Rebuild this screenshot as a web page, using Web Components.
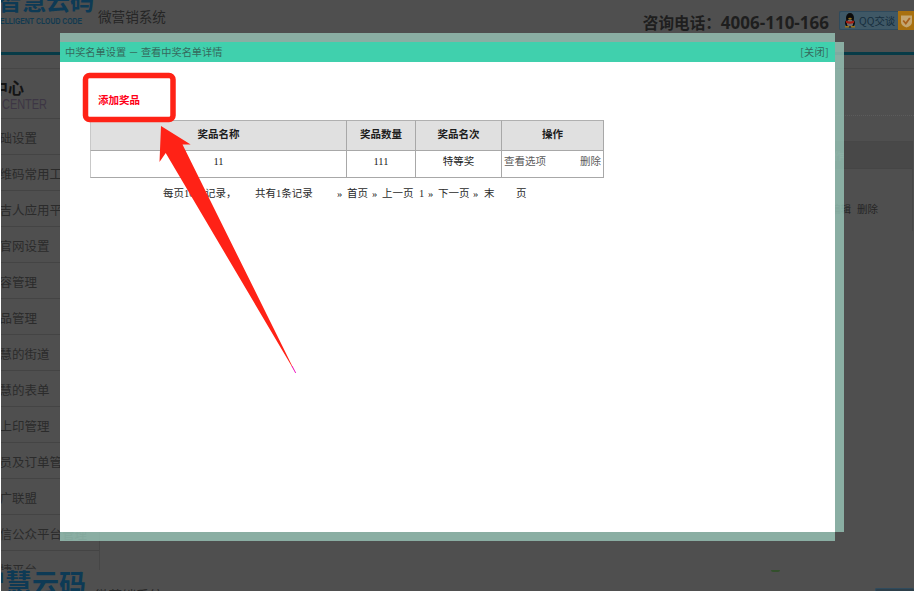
<!DOCTYPE html>
<html lang="zh-CN"><head><meta charset="utf-8"><title>中奖名单设置</title>
<style>
html,body{margin:0;height:591px;overflow:hidden;background:#fff}
body{font-family:"Liberation Serif","Noto Sans CJK SC",serif}
</style></head><body>
<cc-page>
  <cc-header slot="top"></cc-header>
  <cc-side slot="side" title-text="中心" sub="CENTER">
    <cc-item>基础设置</cc-item><cc-item>二维码常用工具</cc-item><cc-item>微吉人应用平台</cc-item><cc-item>微官网设置</cc-item>
    <cc-item>内容管理</cc-item><cc-item>产品管理</cc-item><cc-item>智慧的街道</cc-item><cc-item>智慧的表单</cc-item>
    <cc-item>掌上印管理</cc-item><cc-item>会员及订单管理</cc-item><cc-item>推广联盟</cc-item><cc-item>微信公众平台管理</cc-item>
    <cc-item last>快捷平台</cc-item>
  </cc-side>
  <cc-back slot="main"></cc-back>
  <cc-header slot="bottom" second></cc-header>
</cc-page>
<cc-modal heading="中奖名单设置 － 查看中奖名单详情" close="[关闭]">
  <cc-prize-table></cc-prize-table>
  <cc-pager></cc-pager>
</cc-modal>
<cc-callout></cc-callout>
<script>
const CJK='"Noto Sans CJK SC",sans-serif';
function def(name,html,init){
  customElements.define(name,class extends HTMLElement{
    constructor(){super();this.attachShadow({mode:'open'}).innerHTML=html;}
    connectedCallback(){if(init)init(this);}
  });
}
def('cc-page',`<style>
:host{display:flex;flex-direction:column;width:913px;height:591px;margin-left:1px;background:#4f4f4f;overflow:hidden}
.body{display:flex;height:501px;flex:none}
</style><slot name="top"></slot><div class="body"><slot name="side"></slot><slot name="main"></slot></div><slot name="bottom"></slot>`);

def('cc-header',`<style>
:host{display:block;height:69px;flex:none;box-sizing:border-box;border-bottom:1px solid #464646;font-family:${CJK}}
:host([second]){height:30px;border:0}
.row{display:flex;height:52px;position:relative}
.brand{width:97px;flex:none;overflow:hidden;height:28px}
.logo{font:700 24px/24px ${CJK};color:#0d3a55;margin:-12px 0 0 -3px;white-space:nowrap;height:24px}
.en{font:700 8.400px/10px "Liberation Sans",sans-serif;color:#123a50;margin:4px 0 0 -12px;white-space:nowrap;transform:scaleX(.82);transform-origin:0 0;width:130px}
.sys{font-size:13.6px;line-height:16px;color:#262626;margin-top:8px;white-space:nowrap}
.end{margin-left:auto;display:flex;align-items:flex-start}
.tel{font:700 15.6px/22px ${CJK};color:#1e1e1e;margin:11px 10px 0 0;white-space:nowrap}
.tel b{font:700 17px/22px "Open Sans",sans-serif;}
.qq{display:flex;height:19px;margin-top:11px;width:75px}
.qq .l{display:flex;align-items:center;gap:2px;width:59px;box-sizing:border-box;background:#3f5866;border:1px solid #2f4a5c;border-right:0;border-radius:2px 0 0 2px;padding-left:3px;font:10.4px/17px ${CJK};color:#152d3d;white-space:nowrap}
.qq .r{width:16px;background:#a8700f;display:flex;align-items:center;justify-content:center}
.rule{height:3px;background:#073b47}
:host([second]) .brand{width:94px;height:30px}
:host([second]) .logo{font-size:27px;line-height:27px;margin:-1px 0 0 -23px;height:30px}
:host([second]) .en{display:none}
:host([second]) .sys{margin-top:17px}
:host([second]) .tel{visibility:hidden}
:host([second]) .qq{margin-top:18px;width:39px}
:host([second]) .l{width:39px;border-radius:2px;background:#2d3f4a;padding:0;overflow:hidden}
:host([second]) .l *,:host([second]) .r{display:none}
:host([second]) .rule{display:none}
:host([second]) .row{height:30px}
</style><div class="row">
<div class="brand"><div class="logo">智慧云码</div><div class="en">INTELLIGENT CLOUD CODE</div></div>
<div class="sys">微营销系统</div>
<div class="end"><div class="tel">咨询电话：<b>4006-110-166</b></div>
<div class="qq"><div class="l"><svg width="14" height="15" viewBox="0 0 14 15"><ellipse cx="7" cy="5" rx="4" ry="5" fill="#0c0c0c"/><ellipse cx="7" cy="10" rx="5" ry="4.5" fill="#0c0c0c"/><ellipse cx="7" cy="10" rx="3.2" ry="3.6" fill="#6e6e6e"/><path d="M3 7.5Q7 9.6 11 7.500L11 9.800Q7 11.500 3 9.800Z" fill="#a31d12"/><path d="M2 13h4v1.5H2zM8 13h4v1.5H8z" fill="#99741a"/><ellipse cx="7" cy="5.6" rx="1.8" ry=".9" fill="#99741a"/></svg><span>QQ交谈</span></div>
<div class="r"><svg width="13" height="14" viewBox="0 0 13 14"><path d="M1 1.5h11v6.500q0 3.500-5.500 5.500Q1 11.500 1 8z" fill="#c4a671"/><path d="M3.200 6.500l2.600 3 4-5.500" fill="none" stroke="#a8601a" stroke-width="1.800"/></svg></div></div></div>
</div><div class="rule"></div>`);

def('cc-side',`<style>
:host{display:block;width:98px;flex:none;border-right:1px solid #464646;overflow:hidden;font-family:${CJK}}
.head{height:49px;border-bottom:1px solid #444;overflow:hidden}
.t{font:700 16px/20px ${CJK};color:#141414;margin:8px 0 0 -9px}
.s{font:15px/14px "Liberation Sans",sans-serif;color:#3d3644;margin:0 0 0 1px;transform:scaleX(.73);transform-origin:0 0;width:70px}
</style><div class="head"><div class="t"></div><div class="s"></div></div><slot></slot>`,el=>{
  el.shadowRoot.querySelector('.t').textContent=el.getAttribute('title-text');
  el.shadowRoot.querySelector('.s').textContent=el.getAttribute('sub');
});

def('cc-item',`<style>
:host{display:block;height:35px;border-bottom:1px solid #444;font:12.500px/37px ${CJK};color:#2b2b2b;white-space:nowrap;margin-left:-14px}
:host([last]){height:19px;border:0;overflow:visible}
</style><slot></slot>`);

def('cc-back',`<style>
:host{display:block;flex:1;min-width:0;font-family:${CJK}}
.dots{height:46px;border-bottom:1px dotted #5c5c5c}
.box{margin:25px 1px 0 10px;height:89px;border:1px solid #474747;border-bottom:0;font-size:10.500px;color:#262626}
.h{height:26px;background:#484848;border-bottom:1px solid #454545;text-align:right;padding-right:68px;line-height:27px;color:#6c6c6c}
.r{text-align:right;padding:32px 34px 0 0;line-height:16px}
.r span{margin-left:6px}
</style><div class="dots"></div><div class="box"><div class="h">操作</div><div class="r"><span>编辑</span><span>删除</span></div></div>`);

def('cc-modal',`<style>
:host{position:absolute;left:60px;top:33px;display:grid;grid-template:9px 490px 9px/775px 9px;font-family:"Liberation Serif",${CJK};color:#222}
.strip{background:rgba(148,190,178,.85)}
.top{grid-area:1/1}.right{grid-area:2/2}.bottom{grid-area:3/1}
main{grid-area:2/1;background:#fff;display:flex;flex-direction:column;min-height:0}
header{height:20px;flex:none;background:#40d0ad;display:flex;justify-content:space-between;padding:0 6px 0 5px;font:10.200px/20px ${CJK};color:#35695c;white-space:pre}
#c{letter-spacing:.4px}
.content{padding:58px 0 0 30px}
</style><div class="strip top"></div><main><header><span id="h"></span><span id="c"></span></header><div class="content"><slot></slot></div></main><div class="strip right"></div><div class="strip bottom"></div>`,el=>{
  el.shadowRoot.getElementById('h').textContent=el.getAttribute('heading');
  el.shadowRoot.getElementById('c').textContent=el.getAttribute('close');
});

def('cc-prize-table',`<style>
:host{display:grid;width:514px;grid-template-columns:257px 69px 86px 102px;grid-template-rows:31px 27px;box-sizing:border-box;font:10.5px/14px "Liberation Serif",${CJK};color:#222}
div{display:flex;align-items:center;justify-content:center;box-sizing:border-box;border-right:1px solid #a8a8a8;border-bottom:1px solid #a8a8a8}
.th{background:#e0e0e0;font-weight:700;color:#1d1d1d;border-top:1px solid #b0b0b0;padding-bottom:2px}
.td{padding-bottom:5px}
.first{border-left:1px solid #c8c8c8}
.ops{justify-content:space-between;padding:0 2px 5px;color:#5c5c5c}
</style><div class="th first">奖品名称</div><div class="th">奖品数量</div><div class="th">奖品名次</div><div class="th">操作</div>
<div class="td first">11</div><div class="td">111</div><div class="td">特等奖</div><div class="ops"><span>查看选项</span><span>删除</span></div>`);

def('cc-pager',`<style>
:host{display:block;height:20px;margin:9px 0 0 73px;font:10.5px/14px "Liberation Serif",${CJK};color:#2a2a2a;white-space:pre}
.f{display:flex}
</style><div class="f"><span style="width:92px">每页10条记录，</span><span style="width:82px">共有1条记录</span><span style="width:10px">»</span><span style="width:25px">首页</span><span style="width:11px">»</span><span style="width:36px;margin-left:-1px">上一页</span><span style="width:9px;margin-left:1px">1</span><span style="width:10px">»</span><span style="width:36px">下一页</span><span style="width:10px;margin-left:-1px">»</span><span style="width:32px;margin-left:1px">末</span><span>页</span></div>`);

def('cc-callout',`<style>
:host{position:absolute;left:0;top:0;width:917px;height:591px;pointer-events:none}
svg{position:absolute;left:0;top:0}
.mark{position:absolute;left:771px;top:570px;width:9px;height:2px;background:#33502c;border-radius:0 0 5px 5px}
.add{position:absolute;left:98px;top:92px;font:700 10.5px/16px ${CJK};color:#ff0018;white-space:nowrap}
</style><svg width="917" height="591" viewBox="0 0 917 591">
<rect x="85.500" y="75.500" width="87.500" height="44" rx="4" fill="none" stroke="#ff2216" stroke-width="5.500"/>
<polygon points="161,126 190.700,144.500 182.500,144.500 295.700,373 165.700,153 159.500,162" fill="#ff2216"/>
<path d="M292 366L295.700 373" stroke="#ee22cc" stroke-width="1"/>
</svg><div class="add">添加奖品</div><div class="mark"></div>`);
</script></body></html>
